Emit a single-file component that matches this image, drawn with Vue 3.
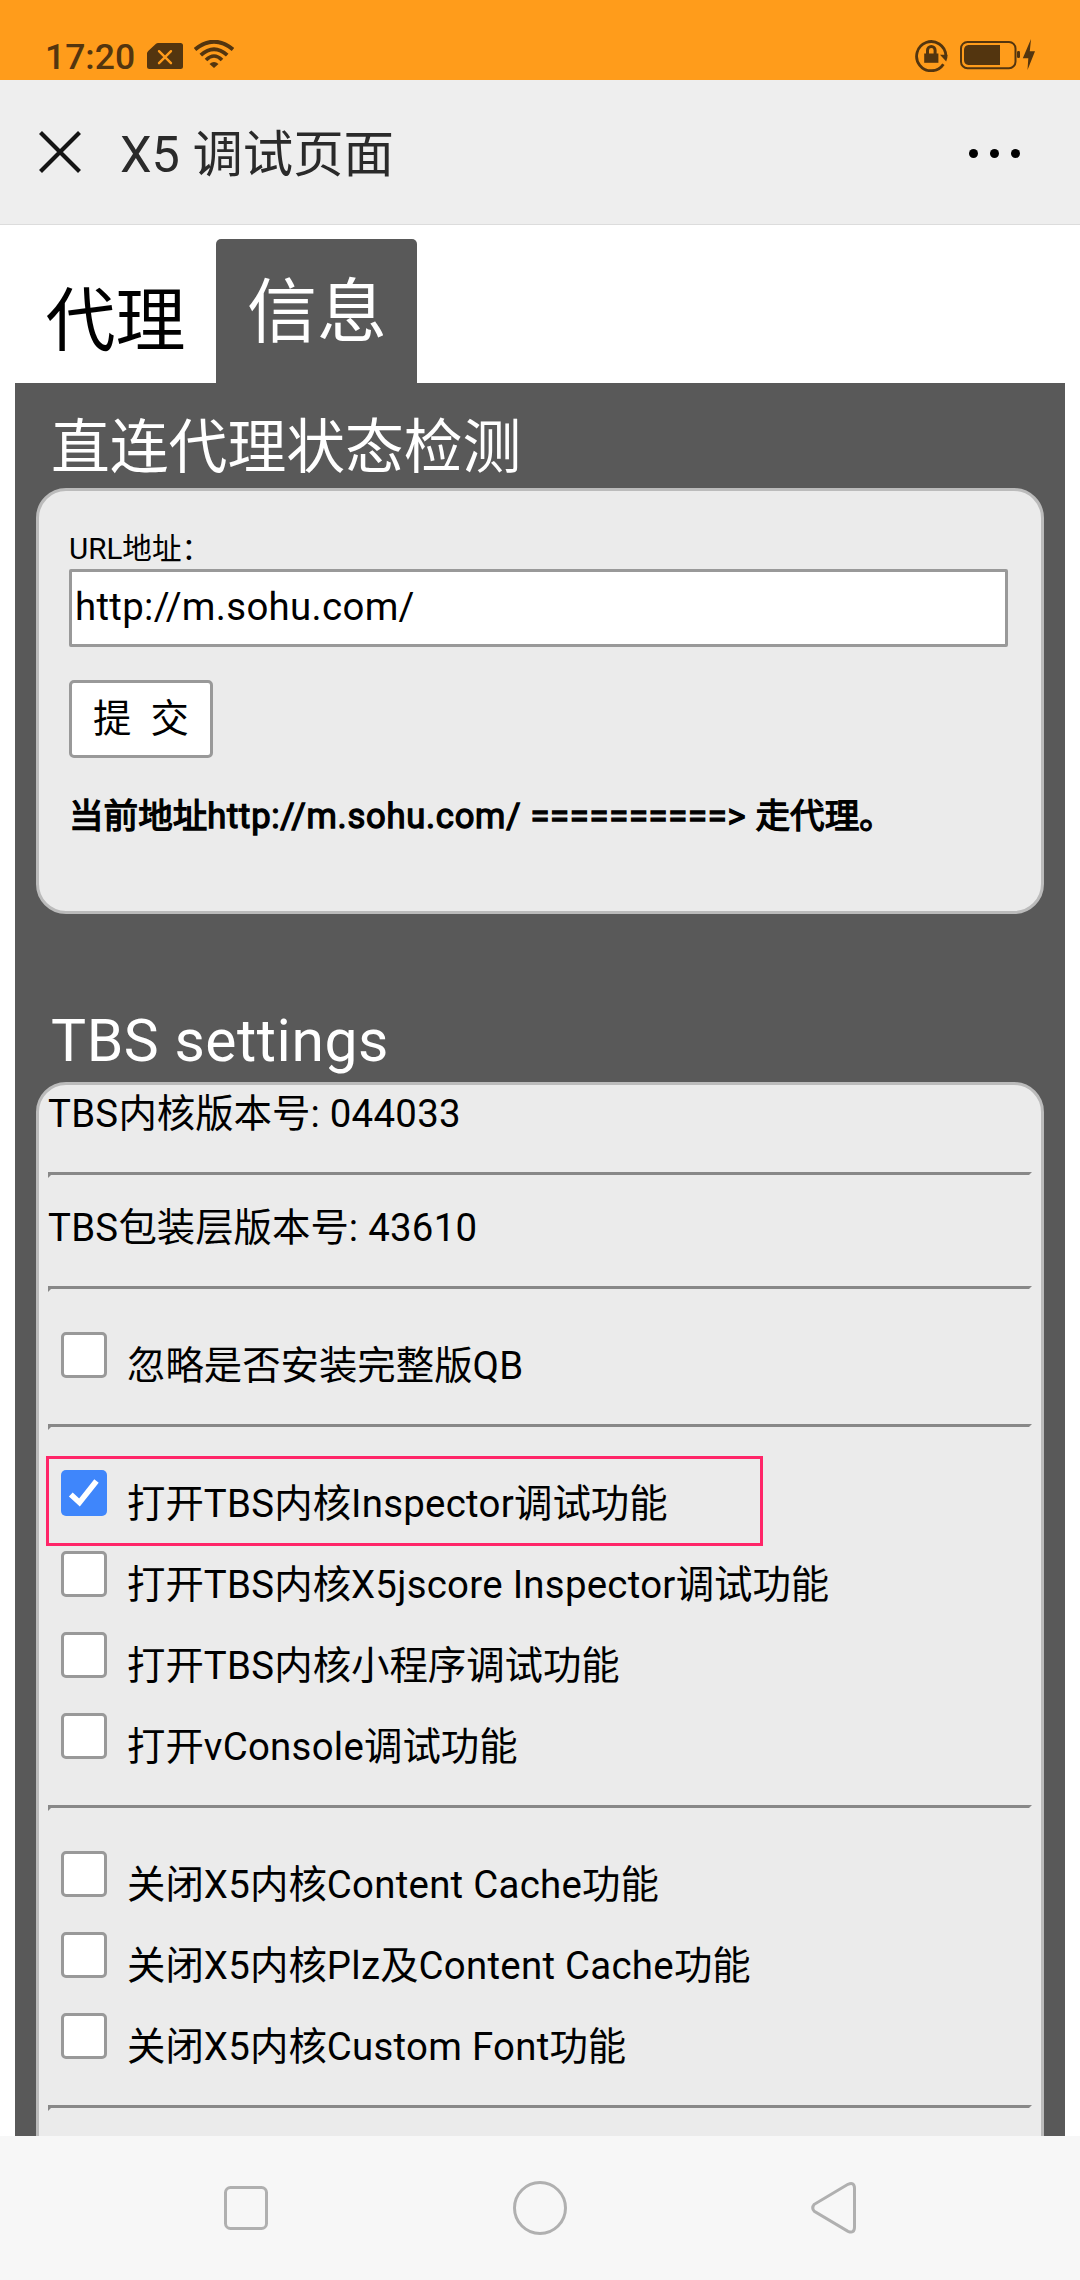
<script setup>
import { ref } from 'vue'

const url = ref('http://m.sohu.com/')

const versions = ['TBS内核版本号: 044033', 'TBS包装层版本号: 43610']

const groups = ref([
  [{ label: '忽略是否安装完整版QB', checked: false }],
  [
    { label: '打开TBS内核Inspector调试功能', checked: true, marked: true },
    { label: '打开TBS内核X5jscore Inspector调试功能', checked: false },
    { label: '打开TBS内核小程序调试功能', checked: false },
    { label: '打开vConsole调试功能', checked: false },
  ],
  [
    { label: '关闭X5内核Content Cache功能', checked: false },
    { label: '关闭X5内核Plz及Content Cache功能', checked: false },
    { label: '关闭X5内核Custom Font功能', checked: false },
  ],
])

// Splits a label into Latin and Chinese runs; Latin runs are tracked slightly wider.
const runs = (text) =>
  text.match(/[\x20-\x7e]+|[^\x20-\x7e]+/g).map((t) => ({ t, latin: t.charCodeAt(0) < 127 }))
</script>

<template>
  <div class="screen">
    <div class="status">
      <span class="time">17:20</span>
      <svg class="sim" width="36" height="26" viewBox="0 0 36 26">
        <path d="M11 0H33.5A2.5 2.5 0 0 1 36 2.500V23.500A2.500 2.500 0 0 1 33.500 26H2.500A2.500 2.500 0 0 1 0 23.500V10.500Q0 9 1.200 8L9 .8Q10 0 11 0Z" fill="#53350f" />
        <path d="M12 8.200 24 20.200M24 8.200 12 20.200" stroke="#ff9c1b" stroke-width="2.400" stroke-linecap="round" />
      </svg>
      <svg class="wifi" width="40" height="28" viewBox="0 0 40 28" fill="none" stroke="#53350f">
        <path d="M1 9.500Q20 -6 39 9.500" stroke-width="4" />
        <path d="M6.800 15.200Q20 3.200 33.200 15.200" stroke-width="3.800" />
        <path d="M12 20Q20 12 28 20" stroke-width="3.600" />
        <path d="M15.500 24Q20 20 24.500 24L20 28Z" fill="#53350f" stroke="none" />
      </svg>
      <span class="spacer"></span>
      <svg class="lock" width="33" height="33" viewBox="0 0 33 33">
        <path d="M28.400 25.200A14.600 14.600 0 1 1 30.800 16.500" fill="none" stroke="#53350f" stroke-width="2.800" />
        <path d="M25 15.800H32.600Q32.600 19 31.200 22.600Z" fill="#53350f" />
        <path d="M9.200 14.500H23.400V23.800H9.200Z" fill="#53350f" />
        <path d="M12.500 15V11.200A3.800 3.800 0 0 1 20.100 11.200V15" fill="none" stroke="#53350f" stroke-width="3" />
      </svg>
      <svg class="battery" width="76" height="32" viewBox="0 0 76 32">
        <rect x="1" y="3" width="54.500" height="26.200" rx="6.500" fill="none" stroke="#53350f" stroke-width="2" />
        <path d="M8.500 6H40V26H8.500Q4 25.500 4 21V11Q4 6.500 8.500 6Z" fill="#53350f" />
        <rect x="57" y="12" width="3" height="7" rx="1.200" fill="#53350f" />
        <path d="M71 0 62.800 19.200H68.300L67.500 31 75 12.200H69.800Z" fill="#53350f" />
      </svg>
    </div>

    <header class="titlebar">
      <svg class="close" width="42" height="42" viewBox="0 0 42 42">
        <path d="M1.500 1.500 40.500 40.500M40.500 1.500 1.500 40.500" stroke="#141414" stroke-width="4.200" />
      </svg>
      <h1>X5 调试页面</h1>
      <span class="dots"><i></i><i></i><i></i></span>
    </header>

    <main class="web">
      <nav class="tabs">
        <a class="tab">代理</a>
        <a class="tab active">信息</a>
      </nav>
      <div class="panel">
        <h2>直连代理状态检测</h2>
        <section class="card proxy">
          <label class="url-label">URL地址：</label>
          <div class="field">{{ url }}</div>
          <button class="submit">提&nbsp;&nbsp;交</button>
          <p class="result">当前地址<span class="latin">{{ url }} ==========&gt; </span>走代理。</p>
        </section>

        <h2 class="second">TBS settings</h2>
        <section class="card settings">
          <template v-for="v in versions" :key="v">
            <p class="version"><span v-for="(r, i) in runs(v)" :key="i" :class="{ latin: r.latin }">{{ r.t }}</span></p>
            <hr />
          </template>
          <template v-for="(group, g) in groups" :key="g">
            <div class="group">
              <div v-for="item in group" :key="item.label" class="row" :class="{ marked: item.marked }">
                <span class="box" :class="{ on: item.checked }" @click="item.checked = !item.checked">
                  <svg v-if="item.checked" width="46" height="46" viewBox="0 0 46 46">
                    <path d="M9.800 24.500 18.500 32.500 35.500 11" fill="none" stroke="#fff" stroke-width="5.600" />
                  </svg>
                </span>
                <span class="text"><span v-for="(r, i) in runs(item.label)" :key="i" :class="{ latin: r.latin }">{{ r.t }}</span></span>
              </div>
            </div>
            <hr />
          </template>
        </section>
      </div>
    </main>

    <footer class="navbar">
      <svg width="44" height="44" viewBox="0 0 44 44"><rect x="1.500" y="1.500" width="41" height="41" rx="5" /></svg>
      <svg width="54" height="54" viewBox="0 0 54 54"><circle cx="27" cy="27" r="25.500" /></svg>
      <svg width="46" height="52" viewBox="0 0 46 52">
        <path d="M37 2.300 3.300 22.300Q.2 26 3.300 29.300L37 49.300Q43.500 52 43.500 45V6.600Q43.500 -.4 37 2.300Z" />
      </svg>
    </footer>
  </div>
</template>

<style>
body {
  margin: 0;
  background: #fff;
}
</style>

<style scoped>
.screen {
  width: 1080px;
  height: 2280px;
  display: flex;
  flex-direction: column;
  overflow: hidden;
  background: #fff;
  color: #000;
  font-family: Roboto, "Noto Sans CJK SC", sans-serif;
}

.status {
  height: 80px;
  flex: none;
  box-sizing: border-box;
  padding: 39px 44px 0 45px;
  display: flex;
  align-items: flex-start;
  background: #ff9c1b;
}
.time {
  width: 102px;
  font-size: 35.5px;
  line-height: 36px;
  font-weight: 500;
  color: #53350f;
}
.sim {
  margin-top: 4px;
}
.wifi {
  margin: 1px 0 0 11px;
}
.spacer {
  flex: 1;
}
.battery {
  margin-left: 12px;
}

.titlebar {
  height: 145px;
  flex: none;
  box-sizing: border-box;
  padding: 0 60px 0 39px;
  display: flex;
  align-items: center;
  background: #eee;
  border-bottom: 1px solid #dcdcdc;
}
h1 {
  flex: 1;
  margin: 5px 0 0 39px;
  font-size: 50.4px;
  line-height: 60px;
  font-weight: 400;
  color: #2a2a2a;
}
.dots {
  display: flex;
  gap: 12px;
  margin-top: 3px;
}
.dots i {
  width: 9px;
  height: 9px;
  border-radius: 50%;
  background: #000;
}

.web {
  flex: 1;
  min-height: 0;
  box-sizing: border-box;
  padding: 14px 15px 0;
  overflow: hidden;
}
.tabs {
  display: flex;
}
.tab {
  box-sizing: border-box;
  width: 201px;
  height: 144px;
  padding-top: 11px;
  text-align: center;
  font-size: 70px;
  line-height: 144px;
}
.tab.active {
  padding: 2px 0 0 1px;
  color: #fff;
  background: #595959;
  border-radius: 5px 5px 0 0;
}
.panel {
  padding: 24px 21px 0;
  background: #595959;
}
h2 {
  margin: 0 0 -1px;
  padding-left: 15px;
  font-size: 58.8px;
  line-height: 82px;
  font-weight: 400;
  color: #fff;
}
h2.second {
  margin: 86px 0 0;
  letter-spacing: 0.55px;
}
.card {
  box-sizing: border-box;
  border: 3px solid #bbb;
  border-radius: 30px;
  background: #ebebeb;
}
.proxy {
  height: 426px;
  padding: 39px 33px 0 30px;
  display: flex;
  flex-direction: column;
  align-items: flex-start;
}
.url-label {
  font-size: 29.6px;
  line-height: 39px;
}
.field {
  box-sizing: border-box;
  width: 939px;
  height: 78px;
  padding-left: 3px;
  border: 3px solid #999;
  border-radius: 2px;
  background: #fff;
  font-size: 38.4px;
  line-height: 70px;
  letter-spacing: 0.32px;
}
.submit {
  box-sizing: border-box;
  width: 144px;
  height: 78px;
  margin-top: 33px;
  padding: 0;
  border: 3px solid #999;
  border-radius: 5px;
  background: #fff;
  color: #000;
  font-family: inherit;
  font-size: 38.4px;
  line-height: 72px;
}
.result {
  margin: 37px 0 0;
  font-size: 34.6px;
  line-height: 42px;
  white-space: nowrap;
  -webkit-text-stroke: 1.3px #000;
}
.result .latin {
  letter-spacing: 0.72px;
}
.latin {
  letter-spacing: 0.27px;
}

.settings {
  height: 1200px;
  padding: 0 9px;
}
.version {
  margin: 21px 0 30px;
  font-size: 38.4px;
  line-height: 57px;
}
.version:first-child {
  margin-top: 0;
}
hr {
  margin: 0;
  height: 0;
  border: 3px solid;
  border-color: #888 #ebebeb #ebebeb #888;
}
.group {
  padding: 33px 0 18px 13px;
}
.row {
  position: relative;
  display: flex;
  align-items: flex-start;
  height: 81px;
}
.row.marked::after {
  content: "";
  position: absolute;
  left: -15px;
  top: -7px;
  width: 711px;
  height: 84px;
  border: 3px solid #ff2568;
}
.box {
  box-sizing: border-box;
  width: 46px;
  height: 46px;
  margin-top: 7px;
  border: 3px solid #999;
  border-radius: 5px;
  background: #fff;
}
.box.on {
  border: 0;
  background: #3f86fb;
}
.box svg {
  display: block;
}
.text {
  margin-left: 20px;
  font-size: 38.4px;
  line-height: 82px;
  white-space: nowrap;
}

.navbar {
  height: 144px;
  flex: none;
  box-sizing: border-box;
  padding: 0 223px 0 224px;
  display: flex;
  align-items: center;
  justify-content: space-between;
  background: #f7f7f7;
}
.navbar svg {
  fill: none;
  stroke: #b0b0b0;
  stroke-width: 3;
}
</style>
